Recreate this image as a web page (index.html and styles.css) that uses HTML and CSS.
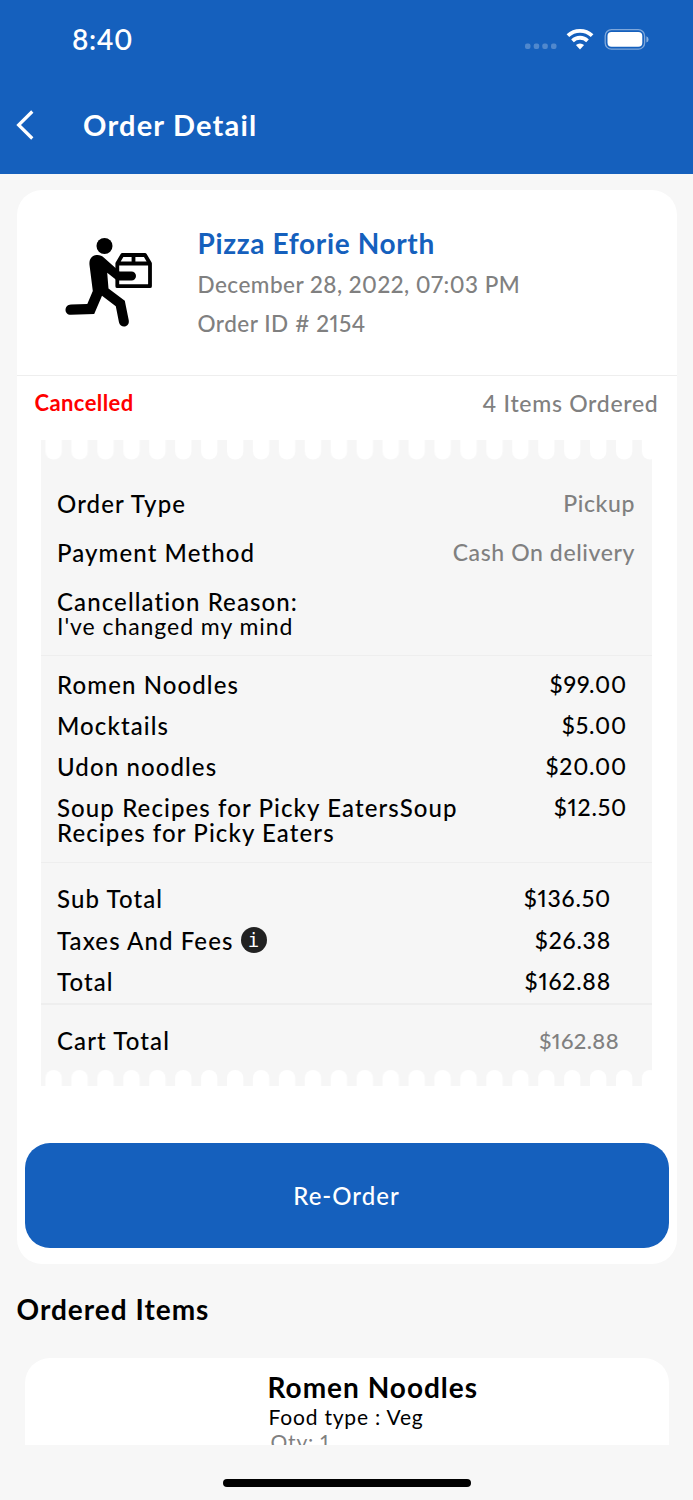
FILE: index.html
```html
<!DOCTYPE html>
<html lang="en">
<head>
    <meta charset="UTF-8">
    <meta name="viewport" content="width=device-width, initial-scale=1.0">
    <title>Order Detail</title>
    <link rel="stylesheet" href="styles.css">
</head>
<body>
    <header class="header">
        <div class="status-bar">
            <span class="time">8:40</span>
            <svg class="status-icons" width="126" height="24" viewBox="0 0 126 24">
                <g fill="#fff" opacity="0.25">
                    <rect x="1" y="15.5" width="5.5" height="5.5" rx="2"/>
                    <rect x="9.7" y="15.5" width="5.5" height="5.5" rx="2"/>
                    <rect x="18.3" y="15.5" width="5.5" height="5.5" rx="2"/>
                    <rect x="27" y="15.5" width="5.5" height="5.5" rx="2"/>
                </g>
                <g fill="none" stroke="#fff" stroke-width="3.8">
                    <path d="M43.9 7.7a17.6 17.6 0 0 1 24.2 0"/>
                    <path d="M48.5 12.8a10.8 10.8 0 0 1 15 0"/>
                </g>
                <path d="M51.9 17a6 6 0 0 1 8.2 0L56 21.4z" fill="#fff"/>
                <rect x="81.2" y="1.6" width="39.4" height="19.6" rx="6.3" fill="none" stroke="#fff" stroke-width="1.3" opacity="0.45"/>
                <rect x="83.5" y="4" width="34.8" height="14.8" rx="4" fill="#fff"/>
                <path d="M122.4 8.2v6.4q2.2-.9 2.2-3.2t-2.2-3.2z" fill="#fff" opacity="0.5"/>
            </svg>
        </div>
        <div class="nav-bar">
            <svg class="back" width="20" height="30" viewBox="0 0 20 30">
                <path d="M17.3 1.5L3.6 15l13.7 13.5" fill="none" stroke="#fff" stroke-width="3.2"/>
            </svg>
            <h1>Order Detail</h1>
        </div>
    </header>

    <main class="content">
        <section class="card">
            <div class="shop">
                <svg class="runner" width="90" height="92" viewBox="0 0 90 92">
                    <circle cx="39.5" cy="10" r="8"/>
                    <path transform="translate(0 1.5)" d="M24.5 27.5c-.6-6 2.5-9.500 7-10 3-.3 5.5.8 7.5 2.7L54.500 34H66.5a4.500 4.500 0 0 1 0 9H52L42.200 35.200 43.500 51 59.800 63.300 63.700 82.500c1.400 7.500-8.200 8.500-9.700 2.500L50.800 68.800 37 58.200 29.200 76.400 6 77.300c-7.400.2-7.200-9.900 0-10.200L22.300 66.600 27.800 53.500z"/>
                    <path d="M52.300 43V27.500l5-8.500H80l5 8.500v22.700H52.300V42M52.300 27.500H85M68.500 19v8" fill="none" stroke="#000" stroke-width="3.8" stroke-linejoin="round"/>
                </svg>
                <div class="shop-info">
                    <h2>Pizza Eforie North</h2>
                    <p class="date">December 28, 2022, 07:03 PM</p>
                    <p>Order ID # 2154</p>
                </div>
            </div>

            <div class="order-status">
                <span class="cancelled">Cancelled</span>
                <span class="count">4 Items Ordered</span>
            </div>

            <div class="receipt">
                <svg class="teeth" width="611" height="20">
                    <defs>
                        <pattern id="top-teeth" x="4.5" width="25.93" height="20" patternUnits="userSpaceOnUse">
                            <path d="M0 0h16.3v11.5a8.15 8 0 0 1-16.3 0z" fill="#fff"/>
                        </pattern>
                    </defs>
                    <rect width="611" height="20" fill="url(#top-teeth)"/>
                </svg>
                <div class="info">
                    <div class="row"><span>Order Type</span><span class="value">Pickup</span></div>
                    <div class="row"><span>Payment Method</span><span class="value">Cash On delivery</span></div>
                    <div>
                        <div>Cancellation Reason:</div>
                        <div class="reason">I've changed my mind</div>
                    </div>
                </div>
                <div class="items">
                    <div class="row"><span>Romen Noodles</span><span class="price">$99.00</span></div>
                    <div class="row"><span>Mocktails</span><span class="price">$5.00</span></div>
                    <div class="row"><span>Udon noodles</span><span class="price">$20.00</span></div>
                    <div class="row"><span class="long-name">Soup Recipes for Picky EatersSoup Recipes for Picky Eaters</span><span class="price">$12.50</span></div>
                </div>
                <div class="totals">
                    <div class="row"><span>Sub Total</span><span class="price">$136.50</span></div>
                    <div class="row">
                        <span class="taxes">Taxes And Fees <i class="info-icon">i</i></span>
                        <span class="price">$26.38</span>
                    </div>
                    <div class="row"><span>Total</span><span class="price">$162.88</span></div>
                </div>
                <div class="cart-total">
                    <div class="row"><span>Cart Total</span><span class="amount">$162.88</span></div>
                </div>
                <svg class="teeth" width="611" height="16">
                    <defs>
                        <pattern id="bottom-teeth" x="4.5" width="25.93" height="17" patternUnits="userSpaceOnUse">
                            <path d="M0 17V8a8.15 8 0 0 1 16.3 0v9z" fill="#fff"/>
                        </pattern>
                    </defs>
                    <rect width="611" height="16" fill="url(#bottom-teeth)"/>
                </svg>
            </div>

            <button class="reorder">Re-Order</button>
        </section>

        <h3>Ordered Items</h3>
        <section class="item-card">
            <h4>Romen Noodles</h4>
            <p>Food type : Veg</p>
            <p class="qty">Qty: 1</p>
        </section>
    </main>

    <footer class="home">
        <div class="home-bar"></div>
    </footer>
</body>
</html>
```
FILE: styles.css
```css
* {
    box-sizing: border-box;
}
body {
    margin: 0;
    height: 1500px;
    display: flex;
    flex-direction: column;
    overflow: hidden;
    background-color: #f7f7f7;
    font-family: Lato, "Open Sans", sans-serif;
    font-size: 24px;
    font-weight: 500;
    line-height: 25px;
    letter-spacing: 1.1px;
    color: #000;
    font-variant-ligatures: none;
    font-variant-numeric: proportional-nums;
}
h1, h2, h3, h4, p {
    margin: 0;
}
svg {
    display: block;
    flex-shrink: 0;
}
.header {
    height: 174px;
    background-color: #1560bd;
    color: white;
}
.status-bar {
    display: flex;
    justify-content: space-between;
    height: 78px;
    padding: 28px 43px 0 72px;
}
.time {
    margin-top: -1px;
    font-size: 28px;
    font-weight: 600;
    letter-spacing: 0.6px;
}
.nav-bar {
    display: flex;
    align-items: center;
    gap: 48px;
    height: 94px;
    padding-left: 15px;
}
.nav-bar h1 {
    margin-bottom: 2px;
    font-size: 29px;
    font-weight: 700;
    letter-spacing: 1.2px;
}
.content {
    height: 1271px;
    padding: 16px 16.5px 0;
    overflow: hidden;
}
.card {
    height: 1074px;
    padding-bottom: 16px;
    background: white;
    border-radius: 25px;
}
.shop {
    display: flex;
    gap: 43px;
    height: 186px;
    padding: 46px 0 0 48px;
    border-bottom: 1px solid #eee;
}
.shop-info {
    padding-top: 1px;
    font-size: 22.5px;
    letter-spacing: 0.5px;
    color: #808080;
}
.shop h2 {
    margin: -6px 0 16px;
    font-size: 28px;
    font-weight: 700;
    letter-spacing: 0.65px;
    color: #1560bd;
}
.shop .date {
    margin-bottom: 14px;
}
.order-status {
    display: flex;
    justify-content: space-between;
    height: 64px;
    padding: 14px 18px 0;
}
.cancelled {
    font-size: 22px;
    font-weight: 700;
    letter-spacing: 0.4px;
    color: #f00;
}
.count {
    margin-top: 1px;
    font-size: 23px;
    letter-spacing: 0.7px;
    color: #808080;
}
.receipt {
    width: 611px;
    margin: 0 auto 57px;
    background: #f6f6f6;
}
.row {
    display: flex;
    justify-content: space-between;
}
.value {
    font-size: 23px;
    letter-spacing: 0.6px;
    color: #808080;
}
.info {
    display: flex;
    flex-direction: column;
    gap: 24px;
    height: 195px;
    padding: 31px 17px 0 16px;
}
.reason {
    font-size: 23px;
    font-weight: 400;
    letter-spacing: 0.95px;
}
.items {
    display: flex;
    flex-direction: column;
    gap: 16px;
    height: 207px;
    padding: 16px 25px 0 16px;
    border-top: 1px solid #eee;
}
.long-name {
    width: 430px;
}
.price {
    font-size: 23px;
    letter-spacing: 0.8px;
}
.totals {
    display: flex;
    flex-direction: column;
    gap: 16.5px;
    height: 141px;
    padding: 23px 41px 0 16px;
    border-top: 1px solid #eee;
}
.taxes {
    display: flex;
    align-items: center;
    gap: 7px;
}
.info-icon {
    display: flex;
    justify-content: center;
    align-items: center;
    width: 26px;
    height: 26px;
    margin: -1px 0;
    border-radius: 50%;
    background: #222;
    color: white;
    font-family: "DejaVu Sans Mono", monospace;
    font-size: 19px;
    font-style: normal;
    letter-spacing: 0;
}
.cart-total {
    height: 67px;
    padding: 23px 33px 0 16px;
    border-top: 2px solid #eee;
}
.amount {
    font-size: 22px;
    letter-spacing: 0.4px;
    color: #808080;
}
.reorder {
    display: block;
    width: 644px;
    height: 105px;
    margin: 0 auto;
    border: none;
    border-radius: 25px;
    background-color: #1560bd;
    color: white;
    font: inherit;
    letter-spacing: 1px;
    cursor: pointer;
}
h3 {
    margin: 33px 0 36px;
    font-size: 28px;
    font-weight: 700;
    letter-spacing: 1px;
}
.item-card {
    height: 200px;
    margin: 0 8px;
    padding: 17px 0 0 243px;
    background: white;
    border-radius: 25px;
}
.item-card h4 {
    font-size: 28px;
    font-weight: 700;
    letter-spacing: 1px;
    margin-bottom: 4px;
}
.item-card p {
    font-size: 21px;
    font-weight: 400;
    letter-spacing: 0.8px;
    padding-left: 1px;
}
.item-card .qty {
    padding-left: 3px;
    color: #808080;
}
.home {
    display: flex;
    justify-content: center;
    padding-top: 34px;
}
.home-bar {
    width: 248px;
    height: 8px;
    border-radius: 4px;
    background: #000;
}
```
